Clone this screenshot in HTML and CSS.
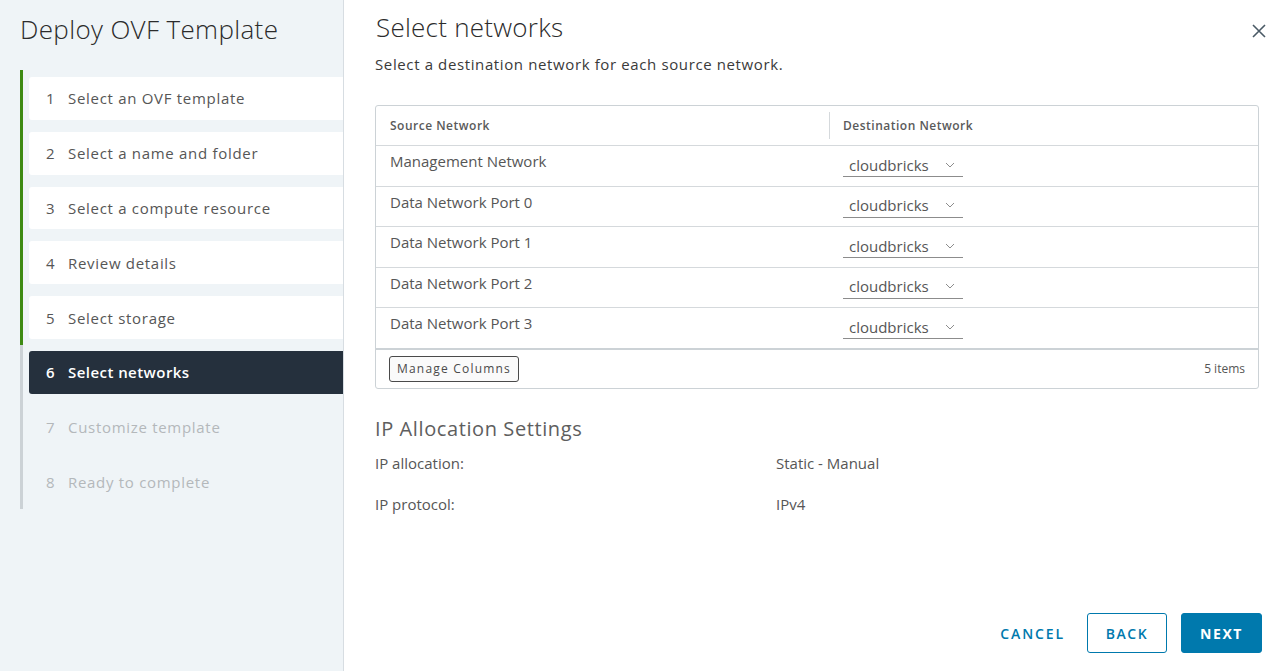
FILE: index.html
```html
<!DOCTYPE html>
<html>
<head>
<meta charset="utf-8">
<link rel="stylesheet" href="styles.css">
</head>
<body>
<div class="wizard">
  <aside class="sidebar">
    <h1 class="wiz-title">Deploy OVF Template</h1>
    <ol class="steps">
      <li class="step done"><div class="step-box"><span class="num">1</span>Select an OVF template</div></li>
      <li class="step done"><div class="step-box"><span class="num">2</span>Select a name and folder</div></li>
      <li class="step done"><div class="step-box"><span class="num">3</span>Select a compute resource</div></li>
      <li class="step done"><div class="step-box"><span class="num">4</span>Review details</div></li>
      <li class="step done"><div class="step-box"><span class="num">5</span>Select storage</div></li>
      <li class="step active"><div class="step-box"><span class="num">6</span>Select networks</div></li>
      <li class="step todo"><div class="step-box"><span class="num">7</span>Customize template</div></li>
      <li class="step todo"><div class="step-box"><span class="num">8</span>Ready to complete</div></li>
    </ol>
  </aside>
  <main class="content">
    <div class="content-head">
      <h2 class="page-title">Select networks</h2>
      <button class="close" aria-label="Close">
        <svg width="16" height="16" viewBox="0 0 16 16"><path d="M2 2 L14 14 M14 2 L2 14" stroke="#4a5a66" stroke-width="1.6" fill="none"/></svg>
      </button>
    </div>
    <p class="subtitle">Select a destination network for each source network.</p>

    <div class="grid">
      <div class="grid-row grid-header">
        <div class="cell col-src">Source Network</div>
        <div class="cell col-dst"><span class="sep"></span>Destination Network</div>
      </div>
      <div class="grid-row">
        <div class="cell col-src">Management Network</div>
        <div class="cell col-dst"><div class="select">cloudbricks<svg class="chev" width="10" height="6" viewBox="0 0 10 6"><path d="M1 1 L5 5 L9 1" stroke="#8c8c8c" fill="none" stroke-width="1"/></svg></div></div>
      </div>
      <div class="grid-row">
        <div class="cell col-src">Data Network Port 0</div>
        <div class="cell col-dst"><div class="select">cloudbricks<svg class="chev" width="10" height="6" viewBox="0 0 10 6"><path d="M1 1 L5 5 L9 1" stroke="#8c8c8c" fill="none" stroke-width="1"/></svg></div></div>
      </div>
      <div class="grid-row">
        <div class="cell col-src">Data Network Port 1</div>
        <div class="cell col-dst"><div class="select">cloudbricks<svg class="chev" width="10" height="6" viewBox="0 0 10 6"><path d="M1 1 L5 5 L9 1" stroke="#8c8c8c" fill="none" stroke-width="1"/></svg></div></div>
      </div>
      <div class="grid-row">
        <div class="cell col-src">Data Network Port 2</div>
        <div class="cell col-dst"><div class="select">cloudbricks<svg class="chev" width="10" height="6" viewBox="0 0 10 6"><path d="M1 1 L5 5 L9 1" stroke="#8c8c8c" fill="none" stroke-width="1"/></svg></div></div>
      </div>
      <div class="grid-row last">
        <div class="cell col-src">Data Network Port 3</div>
        <div class="cell col-dst"><div class="select">cloudbricks<svg class="chev" width="10" height="6" viewBox="0 0 10 6"><path d="M1 1 L5 5 L9 1" stroke="#8c8c8c" fill="none" stroke-width="1"/></svg></div></div>
      </div>
      <div class="grid-footer">
        <button class="manage">Manage Columns</button>
        <span class="count">5 items</span>
      </div>
    </div>

    <h3 class="section-title">IP Allocation Settings</h3>
    <div class="kv">
      <div class="kv-row"><span class="k">IP allocation:</span><span class="v">Static - Manual</span></div>
      <div class="kv-row"><span class="k">IP protocol:</span><span class="v">IPv4</span></div>
    </div>

    <div class="actions">
      <button class="btn btn-link">CANCEL</button>
      <button class="btn btn-outline">BACK</button>
      <button class="btn btn-primary">NEXT</button>
    </div>
  </main>
</div>
</body>
</html>
```

FILE: styles.css
```css
* { box-sizing: border-box; }
html, body {
  margin: 0;
  padding: 0;
  height: 671px;
  overflow: hidden;
  font-family: "Open Sans", "Noto Sans", sans-serif;
  color: #565656;
  background: #fff;
}
button { font-family: inherit; cursor: pointer; }

.wizard {
  display: flex;
  height: 671px;
}

/* Sidebar */
.sidebar {
  width: 344px;
  flex: 0 0 344px;
  background: #eff4f7;
  border-right: 1px solid #d7dde2;
  padding: 12px 0 0 20px;
}
.wiz-title {
  margin: 0;
  font-size: 26px;
  line-height: 34px;
  font-weight: 300;
  color: #2b2b2b;
  letter-spacing: 0.35px;
}
.steps {
  list-style: none;
  margin: 24px 0 0 0;
  padding: 0;
}
.step {
  border-left: 3px solid #ccd2d6;
  padding: 6px 0 6px 6px;
}
.step.done { border-left-color: #3e8a13; }
.step:first-child { padding-top: 7px; }
.step-box {
  height: 42.8px;
  display: flex;
  align-items: center;
  padding-left: 17px;
  font-size: 15px;
  letter-spacing: 0.7px;
  color: #565656;
  border-radius: 3px 0 0 3px;
}
.step.done .step-box { background: #fff; }
.step.active .step-box {
  background: #25303d;
  color: #fff;
  font-weight: 600;
  letter-spacing: 0.45px;
}
.step.todo .step-box { color: #b4b8bb; }
.num {
  width: 22px;
  flex: 0 0 22px;
  letter-spacing: 0;
}

/* Main */
.content {
  flex: 1;
  display: flex;
  flex-direction: column;
  padding: 10px 16px 18px 31px;
}
.content-head {
  display: flex;
  justify-content: space-between;
  align-items: flex-start;
}
.page-title {
  margin: 0 0 0 1px;
  font-size: 26px;
  line-height: 34px;
  font-weight: 300;
  color: #2b2b2b;
  letter-spacing: 0.25px;
}
.close {
  border: 0;
  background: none;
  padding: 0;
  margin-top: 13px;
  width: 16px;
  height: 16px;
  margin-right: -5px;
}
.close svg { display: block; }
.subtitle {
  margin: 9px 0 0 0;
  font-size: 15px;
  line-height: 22px;
  color: #3a3a3a;
  letter-spacing: 0.62px;
}

/* Datagrid */
.grid {
  margin-top: 30px;
  width: 884px;
  border: 1px solid #ccd2d6;
  border-radius: 3px;
  background: #fff;
}
.grid-row {
  display: flex;
  border-bottom: 1px solid #d5d9dc;
  height: 40.5px;
}
.grid-row.last { border-bottom: 2px solid #ccd2d6; height: 41.5px; }
.cell {
  padding: 5px 14px 0 14px;
  font-size: 15px;
  line-height: 20px;
  color: #565656;
}
.col-src { width: 453px; flex: 0 0 453px; }
.col-dst { flex: 1; position: relative; }
.grid-header { height: 40px; }
.grid-header .cell {
  font-size: 12px;
  font-weight: 600;
  letter-spacing: 0.5px;
  padding-top: 10px;
  color: #5a5a5a;
}
.sep {
  position: absolute;
  left: 0;
  top: 6px;
  height: 27px;
  border-left: 1px solid #d5d9dc;
}
.select {
  margin-top: 2px;
  width: 120px;
  height: 24px;
  border-bottom: 1px solid #8c8c8c;
  padding-left: 6px;
  display: flex;
  align-items: center;
  justify-content: space-between;
  padding-right: 8px;
  font-size: 15px;
  color: #565656;
}
.chev { display: block; }
.grid-footer {
  height: 38px;
  display: flex;
  align-items: center;
  justify-content: space-between;
  padding: 0 13px 0 13px;
}
.manage {
  height: 26px;
  border: 1px solid #4a4a4a;
  border-radius: 3px;
  background: #fafafa;
  font-size: 12px;
  letter-spacing: 1.2px;
  color: #4a4a4a;
  padding: 0 7px;
}
.count {
  font-size: 12px;
  color: #565656;
}

/* IP section */
.section-title {
  margin: 28px 0 0 0;
  font-size: 20px;
  line-height: 24px;
  font-weight: 400;
  color: #5e5e5e;
  letter-spacing: 0.6px;
}
.kv { margin-top: 12px; }
.kv-row {
  display: flex;
  height: 41px;
  font-size: 15px;
  line-height: 20px;
  color: #565656;
}
.k { width: 401px; flex: 0 0 401px; }

/* Actions */
.actions {
  margin-top: auto;
  display: flex;
  justify-content: flex-end;
  gap: 14px;
}
.btn {
  height: 40px;
  font-size: 14px;
  font-weight: 600;
  letter-spacing: 1.6px;
  border-radius: 3px;
  padding: 0 17px;
}
.btn-link {
  border: 0;
  background: none;
  color: #0079ad;
  padding: 0 8px 0 9px;
  letter-spacing: 1.9px;
}
.btn-outline {
  border: 1px solid #0079ad;
  background: #fff;
  color: #0079ad;
  width: 80px;
}
.btn-primary {
  border: 1px solid #0079ad;
  background: #0079ad;
  color: #fff;
  width: 81px;
  font-weight: 700;
}
```
